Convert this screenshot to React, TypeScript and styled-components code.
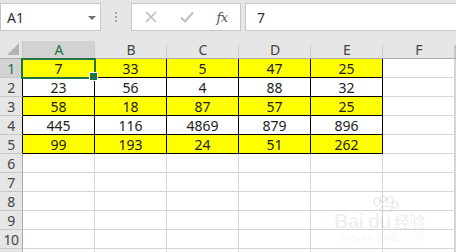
import React from "react";
import styled, { createGlobalStyle } from "styled-components";

const GlobalStyle = createGlobalStyle`
  html, body { margin: 0; padding: 0; background: #ffffff; }
  body { font-family: "Noto Sans", "Liberation Sans", sans-serif; overflow: hidden; }
  * { box-sizing: border-box; }
`;

const Root = styled.div`
  position: relative;
  width: 456px;
  height: 252px;
  overflow: hidden;
  background: #ffffff;
`;

const FormulaBar = styled.div`
  display: flex;
  align-items: flex-start;
  height: 41px;
  padding-top: 3px;
  background: #e6e6e6;
`;

const NameBox = styled.div`
  position: relative;
  display: flex;
  align-items: center;
  width: 101px;
  height: 28px;
  padding-left: 6px;
  background: #ffffff;
  border: 1px solid #c6c6c6;
  font-size: 14px;
  color: #333333;
`;

const DropArrow = styled.span`
  position: absolute;
  left: 87px;
  top: 12px;
  width: 0;
  height: 0;
  border-left: 4px solid transparent;
  border-right: 4px solid transparent;
  border-top: 4px solid #6e6e6e;
`;

const Dots = styled.div`
  display: flex;
  flex-direction: column;
  gap: 2px;
  width: 30px;
  padding-top: 9px;
  align-items: center;
`;

const Dot = styled.span`
  width: 2px;
  height: 2px;
  background: #a6a6a6;
`;

const FxBox = styled.div`
  display: flex;
  align-items: center;
  width: 110px;
  height: 28px;
  background: #ffffff;
  border: 1px solid #c6c6c6;
`;

const IconSlot = styled.span<{ $w: number }>`
  display: flex;
  align-items: center;
  justify-content: center;
  width: ${(p) => p.$w}px;
  height: 100%;
`;

const FxText = styled.span`
  font-family: "DejaVu Serif", "Liberation Serif", serif;
  font-style: italic;
  font-size: 13px;
  color: #555555;
  letter-spacing: -0.5px;
`;

const FormulaInput = styled.div`
  flex: 1;
  display: flex;
  align-items: center;
  height: 28px;
  margin-left: 4px;
  padding-left: 11px;
  background: #ffffff;
  border: 1px solid #c6c6c6;
  border-right: none;
  font-size: 14px;
  color: #333333;
`;

const Sheet = styled.div`
  display: grid;
  grid-template-columns: 23px repeat(6, 72px) 1fr;
  grid-auto-rows: 19px;
  grid-template-rows: 18px;
`;

const Corner = styled.div`
  position: relative;
  background: #e6e6e6;
  border-right: 1px solid #c6c6c6;
  border-bottom: 1px solid #ababab;
`;

const CornerTri = styled.span`
  position: absolute;
  right: 3px;
  bottom: 3px;
  width: 0;
  height: 0;
  border-left: 12px solid transparent;
  border-bottom: 12px solid #b5b5b5;
`;

const ColHead = styled.div<{ $sel?: boolean }>`
  position: relative;
  display: flex;
  align-items: center;
  justify-content: center;
  background: ${(p) => (p.$sel ? "#d2d2d2" : "#e6e6e6")};
  border-bottom: 1px solid #ababab;
  font-size: 14px;
  color: ${(p) => (p.$sel ? "#217346" : "#444444")};
  &::after {
    content: "";
    position: absolute;
    right: 0;
    top: 4px;
    bottom: 0;
    width: 1px;
    background: #c6c6c6;
  }
`;

const RowHead = styled.div<{ $sel?: boolean; $dark?: boolean }>`
  display: flex;
  align-items: center;
  justify-content: center;
  background: ${(p) => (p.$sel ? "#d2d2d2" : "#e6e6e6")};
  border-right: 1px solid ${(p) => (p.$dark ? "#000000" : "#ababab")};
  border-bottom: 1px solid #c6c6c6;
  font-size: 14px;
  letter-spacing: -0.5px;
  color: ${(p) => (p.$sel ? "#217346" : "#444444")};
`;

const Cell = styled.div<{ $fill?: boolean; $data?: boolean; $sel?: boolean }>`
  position: relative;
  display: flex;
  align-items: center;
  justify-content: center;
  background: ${(p) => (p.$fill ? "#ffff00" : "#ffffff")};
  border-right: 1px solid ${(p) => (p.$data ? "#000000" : "#d4d4d4")};
  border-bottom: 1px solid ${(p) => (p.$data ? "#000000" : "#d4d4d4")};
  font-size: 14px;
  color: #222222;
  padding-top: 1px;
  ${(p) =>
    p.$sel
      ? `
    &::before {
      content: "";
      position: absolute;
      left: -2px;
      top: -1px;
      right: -2px;
      bottom: -2px;
      border: 2px solid #217346;
      z-index: 2;
    }
    &::after {
      content: "";
      position: absolute;
      right: -4px;
      bottom: -4px;
      width: 7px;
      height: 7px;
      background: #217346;
      border: 1px solid #ffffff;
      z-index: 3;
    }
  `
      : ""}
`;

const Watermark = styled.div`
  position: absolute;
  left: 334px;
  top: 196px;
  display: flex;
  flex-direction: column;
  align-items: flex-start;
  pointer-events: none;
  color: rgba(0, 0, 0, 0.07);
  font-family: "Liberation Sans", "Noto Sans CJK SC", sans-serif;
`;

const MarkRow = styled.div`
  display: flex;
  align-items: flex-end;
  font-size: 20px;
  font-weight: bold;
  line-height: 22px;
  letter-spacing: -0.5px;
`;

const MarkCn = styled.span`
  font-family: "Noto Sans CJK SC", sans-serif;
  font-size: 16px;
  font-weight: bold;
  margin-left: 3px;
`;

const MarkUrl = styled.div`
  font-size: 10px;
  margin-left: 6px;
  letter-spacing: 0.2px;
`;

const cols = ["A", "B", "C", "D", "E", "F"];
const data = [
  ["7", "33", "5", "47", "25"],
  ["23", "56", "4", "88", "32"],
  ["58", "18", "87", "57", "25"],
  ["445", "116", "4869", "879", "896"],
  ["99", "193", "24", "51", "262"],
];

export default function App() {
  const rows = Array.from({ length: 11 }, (_, i) => i + 1);
  return (
    <Root>
      <GlobalStyle />
      <FormulaBar>
        <NameBox>
          A1
          <DropArrow />
        </NameBox>
        <Dots>
          <Dot />
          <Dot />
          <Dot />
        </Dots>
        <FxBox>
          <IconSlot $w={38}>
            <svg width="12" height="12" viewBox="0 0 12 12">
              <path d="M1 1 L11 11 M11 1 L1 11" stroke="#bdbdbd" strokeWidth="1.6" fill="none" />
            </svg>
          </IconSlot>
          <IconSlot $w={34}>
            <svg width="14" height="12" viewBox="0 0 14 12">
              <path d="M1 6.5 L5 10.5 L13 1.5" stroke="#bdbdbd" strokeWidth="2" fill="none" />
            </svg>
          </IconSlot>
          <IconSlot $w={36}>
            <FxText>fx</FxText>
          </IconSlot>
        </FxBox>
        <FormulaInput>7</FormulaInput>
      </FormulaBar>
      <Sheet>
        <Corner>
          <CornerTri />
        </Corner>
        {cols.map((c) => (
          <ColHead key={c} $sel={c === "A"}>
            {c}
          </ColHead>
        ))}
        <ColHead />
        {rows.map((r) => (
          <React.Fragment key={r}>
            <RowHead $sel={r === 1} $dark={r <= 5}>
              {r <= 10 ? r : ""}
            </RowHead>
            {cols.map((c, ci) => {
              const isData = r <= 5 && ci < 5;
              return (
                <Cell
                  key={c}
                  $data={isData}
                  $fill={isData && r % 2 === 1}
                  $sel={r === 1 && ci === 0}
                >
                  {isData ? data[r - 1][ci] : ""}
                </Cell>
              );
            })}
            <Cell />
          </React.Fragment>
        ))}
      </Sheet>
      <Watermark>
        <svg width="30" height="16" viewBox="0 0 30 16" style={{ marginLeft: 36, marginBottom: -2 }}>
          <g fill="none" stroke="rgba(0,0,0,0.08)" strokeWidth="1.5">
            <ellipse cx="7" cy="6" rx="3" ry="4" />
            <ellipse cx="13" cy="3" rx="3" ry="3" />
            <ellipse cx="20" cy="4" rx="3" ry="3" />
            <ellipse cx="25" cy="9" rx="3" ry="3" />
            <ellipse cx="16" cy="13" rx="6" ry="3" />
          </g>
        </svg>
        <MarkRow>
          Bai<span style={{ marginLeft: 4 }}>du</span>
          <MarkCn>经验</MarkCn>
        </MarkRow>
        <MarkUrl>jingyan.baidu.com</MarkUrl>
      </Watermark>
    </Root>
  );
}
